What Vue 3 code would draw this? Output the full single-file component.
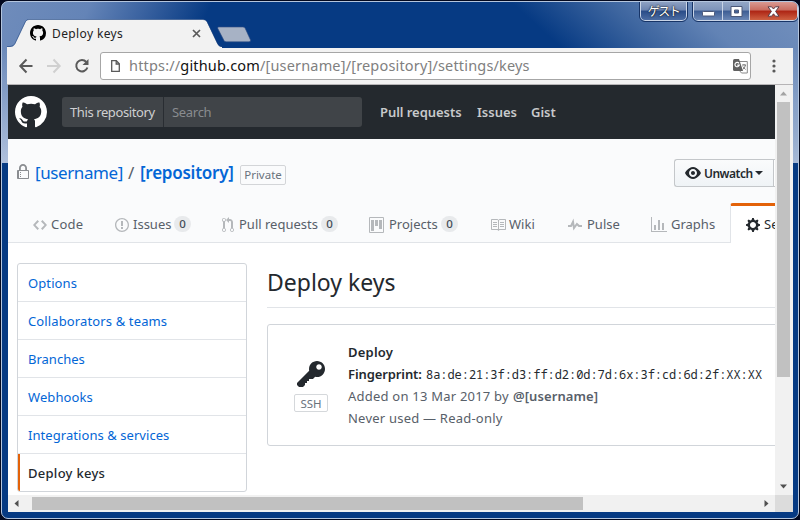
<script setup>
const mark = 'M8 0C3.58 0 0 3.58 0 8c0 3.54 2.29 6.53 5.47 7.59.4.07.55-.17.55-.38 0-.19-.01-.82-.01-1.49-2.01.37-2.53-.49-2.69-.94-.09-.23-.48-.94-.82-1.13-.28-.15-.68-.52-.01-.53.63-.01 1.08.58 1.23.82.72 1.21 1.87.87 2.33.66.07-.52.28-.87.51-1.07-1.78-.2-3.64-.89-3.64-3.95 0-.87.31-1.59.82-2.15-.08-.2-.36-1.02.08-2.12 0 0 .67-.21 2.2.82.64-.18 1.32-.27 2-.27.68 0 1.36.09 2 .27 1.53-1.04 2.2-.82 2.2-.82.44 1.1.16 1.92.08 2.12.51.56.82 1.27.82 2.15 0 3.07-1.87 3.75-3.65 3.95.29.25.54.73.54 1.48 0 1.07-.01 1.93-.01 2.2 0 .21.15.46.55.38A8.013 8.013 0 0 0 16 8c0-4.42-3.58-8-8-8z'

const tabs = [
  { id: 'code', label: 'Code', w: 14, d: 'M9.5 3L8 4.5 11.5 8 8 11.5 9.5 13 14 8 9.5 3zm-5 0L0 8l4.5 5L6 11.5 2.5 8 6 4.5 4.5 3z' },
  { id: 'issues', label: 'Issues', count: 0, w: 14, d: 'M7 2.3c3.14 0 5.7 2.56 5.7 5.7s-2.56 5.7-5.7 5.7A5.71 5.71 0 0 1 1.3 8c0-3.14 2.56-5.7 5.7-5.7zM7 1C3.14 1 0 4.14 0 8s3.14 7 7 7 7-3.14 7-7-3.14-7-7-7zm1 3H6v5h2V4zm0 6H6v2h2v-2z' },
  { id: 'pulls', label: 'Pull requests', count: 0, w: 12, d: 'M11 11.28V5c-.03-.78-.34-1.47-.94-2.06C9.46 2.35 8.78 2.03 8 2H7V0L4 3l3 3V4h1c.27.02.48.11.69.31.21.2.3.42.31.69v6.28A1.993 1.993 0 0 0 10 15a1.993 1.993 0 0 0 1-3.72zm-1 2.92c-.66 0-1.2-.55-1.2-1.2 0-.65.55-1.2 1.2-1.2.65 0 1.2.55 1.2 1.2 0 .65-.55 1.2-1.2 1.2zM4 3c0-1.11-.89-2-2-2a1.993 1.993 0 0 0-1 3.72v6.56A1.993 1.993 0 0 0 2 15a1.993 1.993 0 0 0 1-3.72V4.72c.59-.34 1-.98 1-1.72zm-.8 10c0 .66-.55 1.2-1.2 1.2-.65 0-1.2-.55-1.2-1.2 0-.65.55-1.2 1.2-1.2.65 0 1.2.55 1.2 1.2zM2 4.2C1.34 4.2.8 3.65.8 3c0-.65.55-1.2 1.2-1.2.65 0 1.2.55 1.2 1.2 0 .65-.55 1.2-1.2 1.2z' },
  { id: 'projects', label: 'Projects', count: 0, w: 15, d: 'M10 12h3V3h-3v9zm-4-3h3V3H6v6zm-4 5h3V3H2v11zM14 0H1a1 1 0 0 0-1 1v14a1 1 0 0 0 1 1h13a1 1 0 0 0 1-1V1a1 1 0 0 0-1-1zM1 15V1h13v14H1z' },
  { id: 'wiki', label: 'Wiki', w: 16, d: 'M3 5h4v1H3V5zm0 3h4V7H3v1zm0 2h4V9H3v1zm11-5h-4v1h4V5zm0 2h-4v1h4V7zm0 2h-4v1h4V9zm2-6v9c0 .55-.45 1-1 1H9.5l-1 1-1-1H2c-.55 0-1-.45-1-1V3c0-.55.45-1 1-1h5.5l1 1 1-1H15c.55 0 1 .45 1 1zm-8 .5L7.5 3H2v9h6V3.5zm7-.5H9.5l-.5.5V12h6V3z' },
  { id: 'pulse', label: 'Pulse', w: 14, d: 'M11.5 8L8.8 5.4 6.6 8.5 5.5 1.6 2.38 8H0v2h3.6l.9-1.8.9 5.4L9 8.5l1.6 1.5H14V8h-2.5z' },
  { id: 'graphs', label: 'Graphs', w: 16, d: 'M16 14v1H0V0h1v14h15zM5 13H3V8h2v5zm4 0H7V3h2v10zm4 0h-2V6h2v7z' },
  { id: 'settings', label: 'Settings', w: 14, d: 'M14 8.77v-1.6l-1.94-.64-.45-1.09.88-1.84-1.13-1.13-1.81.91-1.09-.45-.69-1.92h-1.6l-.63 1.94-1.11.45-1.84-.88-1.13 1.13.91 1.81-.45 1.09L0 7.23v1.59l1.94.64.45 1.09-.88 1.84 1.13 1.13 1.81-.91 1.09.45.69 1.92h1.59l.63-1.94 1.11-.45 1.84.88 1.13-1.13-.92-1.81.47-1.09L14 8.75v.02zM7 11c-1.66 0-3-1.34-3-3s1.34-3 3-3 3 1.34 3 3-1.34 3-3 3z' },
]

const menu = [
  { id: 'options', label: 'Options' },
  { id: 'collab', label: 'Collaborators & teams' },
  { id: 'branches', label: 'Branches' },
  { id: 'webhooks', label: 'Webhooks' },
  { id: 'integrations', label: 'Integrations & services' },
  { id: 'keys', label: 'Deploy keys' },
]
</script>

<template>
  <div class="desktop">
    <div class="window">
      <header class="titlebar">
        <svg class="tabshape" width="260" height="30" viewBox="0 0 260 30">
          <path d="M0 29.500V28H3Q6.500 28 8 25L18.500 3Q19.500 .5 22 .5H196Q199 .5 200 3L210.500 25Q212 28 215 28V29.500Z" fill="#f2f2f2" />
          <path d="M0 27.500H3Q6.500 27.500 8 24.500L18.500 2.500Q19.500 .5 22 .5H196Q199 .5 200 2.500L210.500 24.500Q212 27.500 215 27.500" fill="none" stroke="#193f7c" stroke-opacity=".55" />
          <path d="M211.500 8H235.500Q237.500 8 238 9L243.500 21Q244 22.800 242 22.800H219.500Q217.500 22.800 217 21.500L210.800 9.500Q210.500 8 211.500 8Z" fill="#a7b2c5" stroke="#324f83" stroke-opacity=".6" />
        </svg>
        <div class="tab">
          <svg class="favicon" width="16" height="16" viewBox="0 0 16 16"><path :d="mark" /></svg>
          <span class="tabtitle">Deploy keys</span>
          <svg class="tabclose" width="9" height="9" viewBox="0 0 9 9"><path d="M1 1l7 7M8 1L1 8" stroke="#5a5a5a" stroke-width="1.700" /></svg>
        </div>
        <div class="guest">ゲスト</div>
        <div class="controls">
          <span class="ctl min"><svg width="13" height="7" viewBox="0 0 13 7"><rect x=".5" y="1.500" width="12" height="4.500" rx="1" fill="#fff" stroke="#4c5878" /></svg></span>
          <span class="ctl max"><svg width="13" height="11" viewBox="0 0 13 11"><path fill-rule="evenodd" d="M1 .5H12V10.500H1ZM4.500 4V7H8.500V4Z" fill="#fff" stroke="#4c5878" /></svg></span>
          <span class="ctl close"><svg width="13" height="11" viewBox="0 0 13 11"><path d="M1 .8H4.600L6.500 3 8.400.8H12L8.600 5.400 12 10.200H8.400L6.500 7.800 4.600 10.200H1L4.400 5.400Z" fill="#fff" stroke="#5a3c46" /></svg></span>
        </div>
      </header>

      <div class="toolbar">
        <svg class="nav" width="74" height="18" viewBox="0 0 74 18" fill="none" stroke-width="2">
          <path d="M15.500 9H3.500M9.500 2.500L3.300 9 9.500 15.500" stroke="#5a5a5a" />
          <path d="M30 9H42M36.500 2.500L42.700 9 36.500 15.500" stroke="#d0d0d0" />
          <path d="M69.300 5A5.700 5.700 0 1 0 70.400 10.500" stroke="#5a5a5a" />
          <path d="M71.500 2V8H65.500Z" fill="#5a5a5a" />
        </svg>
        <div class="omnibox">
          <svg class="page" width="9" height="12" viewBox="0 0 9 12" fill="none" stroke="#5a5a5a" stroke-width="1.300"><path d="M.7.7H5.300L8.300 3.800V11.300H.7Z" /><path d="M5.200.7V4H8.300" /></svg>
          <span class="url">https://<b>github.com</b>/[username]/[repository]/settings/keys</span>
          <svg class="translate" width="15" height="15" viewBox="0 0 15 15">
            <path d="M6 2.500H14.300V14H8.500L6 11" fill="#fff" stroke="#8a8a8a" />
            <path d="M1.500 0H6L10 12H1.500Q0 12 0 10.500V1.500Q0 0 1.500 0Z" fill="#616161" />
            <path d="M6 4.300A2.200 2.200 0 1 0 6.300 6.100H4.200" fill="none" stroke="#fff" stroke-width="1.200" />
            <path d="M9 6H13M11 5V6M12.500 6Q12 9 9.600 10.500M9.800 7.500L12.500 10.500" fill="none" stroke="#777" />
          </svg>
        </div>
        <svg class="dots" width="4" height="14" viewBox="0 0 4 14" fill="#5a5a5a"><circle cx="2" cy="2" r="1.600" /><circle cx="2" cy="7" r="1.600" /><circle cx="2" cy="12" r="1.600" /></svg>
      </div>

      <div class="body">
        <div class="viewport">
          <div class="ghhead">
            <svg class="logo" width="32" height="32" viewBox="0 0 16 16"><path :d="mark" fill="#fff" /></svg>
            <div class="search"><span class="scope">This repository</span><span class="ph">Search</span></div>
            <span class="hl h1">Pull requests</span><span class="hl h2">Issues</span><span class="hl h3">Gist</span>
          </div>
          <div class="repohead">
            <div class="titlerow">
              <svg class="lock" width="12" height="16" viewBox="0 0 12 16" fill="#8a8d91"><path d="M4 13H3v-1h1v1zm8-6v7c0 .55-.45 1-1 1H1c-.55 0-1-.45-1-1V7c0-.55.45-1 1-1h1V4c0-2.200 1.800-4 4-4s4 1.800 4 4v2h1c.55 0 1 .45 1 1zM3.800 6h4.410V4c0-1.220-.98-2.200-2.200-2.200-1.220 0-2.200.98-2.200 2.200v2H3.800zM11 7H2v7h9V7zM4 8H3v1h1V8zm0 2H3v1h1v-1z" /></svg>
              <span class="owner">[username]</span><span class="slash">/</span><span class="repo">[repository]</span>
              <span class="private">Private</span>
              <div class="watch">
                <svg width="16" height="16" viewBox="0 0 16 16" fill="#24292e"><path d="M8.060 2C3 2 0 8 0 8s3 6 8.060 6C13 14 16 8 16 8s-3-6-7.940-6zM8 12c-2.200 0-4-1.780-4-4 0-2.200 1.800-4 4-4 2.220 0 4 1.800 4 4 0 2.220-1.780 4-4 4zm2-4c0 1.110-.89 2-2 2-1.110 0-2-.89-2-2 0-1.110.89-2 2-2 1.110 0 2 .89 2 2z" /></svg>
                <span class="wt">Unwatch</span><i class="caret"></i>
              </div>
              <div class="watchcount"></div>
            </div>
            <nav class="tabs">
              <div v-for="t in tabs" :key="t.id" class="rt" :class="t.id">
                <svg :width="t.w" height="16" :viewBox="`0 0 ${t.w} 16`"><path fill-rule="evenodd" :d="t.d" /></svg>
                <span class="lab">{{ t.label }}</span>
                <span v-if="t.count !== undefined" class="count">{{ t.count }}</span>
              </div>
            </nav>
          </div>
          <div class="main">
            <div class="menu">
              <div v-for="m in menu" :key="m.id" class="mi" :class="m.id">{{ m.label }}</div>
            </div>
            <div class="content">
              <h2>Deploy keys</h2>
              <div class="box">
                <div class="keycol">
                  <svg width="28" height="32" viewBox="0 0 14 16" fill="#24292e"><path d="M12.830 2.170C12.080 1.420 11.140 1.030 10 1c-1.130.03-2.080.42-2.830 1.170S6.040 3.860 6.010 5c0 .3.03.59.09.89L0 12v1l1 1h2l1-1v-1h1v-1h1v-1h2l1.090-1.110c.3.08.59.11.91.11 1.140-.03 2.080-.42 2.830-1.170S13.970 6.140 14 5c-.03-1.140-.42-2.080-1.170-2.830zM11 5.380c-.77 0-1.380-.61-1.380-1.380 0-.77.61-1.380 1.380-1.380.77 0 1.380.61 1.380 1.380 0 .77-.61 1.380-1.380 1.380z" /></svg>
                  <span class="ssh">SSH</span>
                </div>
                <div class="info">
                  <div class="ln dark"><span class="i1">Deploy</span></div>
                  <div class="ln dark"><span class="i2">Fingerprint:</span><code>8a:de:21:3f:d3:ff:d2:0d:7d:6x:3f:cd:6d:2f:XX:XX</code></div>
                  <div class="ln"><span class="i3">Added on 13 Mar 2017 by</span><span class="i4">@[username]</span></div>
                  <div class="ln"><span class="i5">Never used — Read-only</span></div>
                </div>
              </div>
            </div>
          </div>
        </div>
        <div class="vscroll">
          <svg width="9" height="5" viewBox="0 0 9 5"><path d="M1 4.500L4.500.5 8 4.500Z" fill="#a3a3a3" /></svg>
          <div class="vthumb"></div>
          <svg class="down" width="9" height="5" viewBox="0 0 9 5"><path d="M1 .5H8L4.500 4.500Z" fill="#505050" /></svg>
        </div>
        <div class="hscroll">
          <svg width="5" height="9" viewBox="0 0 5 9"><path d="M4.500 1V8L.5 4.500Z" fill="#505050" /></svg>
          <div class="hthumb"></div>
          <svg class="right" width="5" height="9" viewBox="0 0 5 9"><path d="M.5 1V8L4.500 4.500Z" fill="#505050" /></svg>
        </div>
        <div class="corner"></div>
      </div>
    </div>
  </div>
</template>

<style>
body { margin: 0; background: #000; }
</style>

<style scoped>
* { box-sizing: border-box; }
svg { display: block; flex: none; }
span { white-space: nowrap; }
.desktop { width: 800px; height: 520px; padding: 1px 0 0 1px; background: #03091f; overflow: hidden; font-family: "Noto Sans", sans-serif; color: #24292e; }
.window {
  width: 798px; height: 518px; border: 1px solid #b4c5dd; border-radius: 7px; overflow: hidden;
  display: flex; flex-direction: column;
  background:
    linear-gradient(rgba(190,203,226,0), rgba(200,212,232,.75)) 0 46px / 6px 115px no-repeat,
    linear-gradient(rgba(190,203,226,0), rgba(200,212,232,.75)) 100% 46px / 6px 115px no-repeat,
    linear-gradient(115deg, #6f8cbb 0, #6484b7 22%, #3a62a0 36%, rgba(0,56,130,0) 52%) 0 0 / 330px 161px no-repeat,
    linear-gradient(222deg, #7390bd 0, #6283b5 24%, #3d659f 40%, rgba(0,56,130,0) 60%) 100% 0 / 300px 161px no-repeat,
    #063a83;
}
.titlebar { position: relative; height: 46px; flex: none; display: flex; align-items: flex-start; }
.tabshape { position: absolute; left: 5px; top: 17px; }
.tab { position: relative; width: 210px; height: 28px; margin: 17px 0 0 28px; display: flex; align-items: center; }
.tabtitle { width: 142px; margin-left: 6px; font-size: 12px; letter-spacing: .38px; color: #222; }
.tabclose { margin-left: -2px; }
.guest { margin-left: 400px; width: 47px; height: 19px; border: 1px solid #c9d4e6; border-top: 0; border-radius: 0 0 5px 5px; outline: 1px solid #173467; background: linear-gradient(#8da0c2, #6c84b0 45%, #294c88 50%, #4b6ca2); color: #fff; font: 12px/18px "Noto Sans CJK JP", sans-serif; letter-spacing: -1.500px; text-align: center; text-shadow: 0 0 2px #111, 0 0 1px #111; }
.controls { margin-left: 6px; height: 19px; display: flex; border: 1px solid #c9d4e6; border-top: 0; border-radius: 0 0 5px 5px; outline: 1px solid #173467; overflow: hidden; }
.ctl { height: 18px; display: flex; align-items: center; justify-content: center; background: linear-gradient(#93a6c6, #7d93b9 45%, #3d5d94 50%, #6b87b5); }
.min { width: 29px; padding-top: 5px; border-right: 1px solid #c9d4e6; }
.max { width: 27px; border-right: 1px solid #c9d4e6; }
.close { width: 47px; background: linear-gradient(#d99a92, #c96c5f 45%, #ad2414 50%, #ce6142); }

.toolbar { height: 37px; flex: none; margin: 0 5px; background: #f2f2f2; border-bottom: 1px solid #b6b4b6; display: flex; align-items: center; padding-left: 1px; }
.nav { margin-left: 9px; }
.omnibox { flex: none; width: 651px; height: 28px; margin-left: 9px; background: #fff; border: 1px solid #a6a6a6; border-radius: 3px; display: flex; align-items: center; }
.page { margin-left: 10px; }
.url { width: 602px; margin: -2px 0 0 9px; font-size: 14.500px; letter-spacing: .17px; color: #808080; }
.url b { font-weight: 400; color: #111; }
.translate { margin-left: 2px; }
.dots { margin-left: 21px; }

.body { width: 785px; height: 427px; margin-left: 6px; display: grid; grid-template: 410px 17px / 767px 18px; background: #fff; }
.viewport { overflow: hidden; background: #fff; }
.ghhead { height: 54px; background: #24292e; display: flex; align-items: center; padding-left: 7px; }
.search { width: 300px; height: 30px; margin-left: 15px; background: #404448; border-radius: 3px; display: flex; align-items: center; font-size: 13px; }
.scope { width: 102px; height: 30px; line-height: 30px; padding-left: 8px; border-right: 1px solid #292d32; color: #cfd0d1; letter-spacing: -.4px; }
.ph { margin-left: 8px; color: #898c8f; letter-spacing: -.3px; }
.hl { font-size: 13px; font-weight: 600; color: #c8c9cb; flex: none; }
.h1 { width: 97px; margin-left: 18px; letter-spacing: -.05px; }
.h2 { width: 54px; }

.repohead { height: 104px; background: #fafbfc; border-bottom: 1px solid #e1e4e8; display: flex; flex-direction: column; justify-content: space-between; }
.titlerow { height: 28px; margin-top: 20px; padding-left: 9px; display: flex; align-items: center; font-size: 17px; color: #0366d6; }
.titlerow > * { flex: none; }
.lock { margin-top: -3px; }
.owner, .slash, .repo { margin-top: -2px; }
.owner { width: 92px; margin-left: 6px; letter-spacing: -.4px; }
.slash { width: 13px; padding-left: 1px; color: #586069; }
.repo { width: 100px; font-weight: 600; letter-spacing: -.25px; }
.private { width: 46px; height: 20px; margin-top: 4px; border: 1px solid #d3d5d8; border-radius: 2px; font-size: 11.500px; line-height: 18px; text-align: center; color: #6a737d; }
.watch { width: 99px; height: 28px; margin-left: 388px; border: 1px solid #c4c7ca; border-right: 0; border-radius: 3px 0 0 3px; background: linear-gradient(#fafbfc, #eff3f6); display: flex; align-items: center; padding-left: 10px; color: #24292e; font-size: 12px; font-weight: 600; }
.watchcount { width: 30px; height: 28px; border: 1px solid #c4c7ca; background: #fff; }
.wt { width: 48px; margin-left: 3px; letter-spacing: -.5px; }
.caret { margin-left: 3px; border: 4px solid transparent; border-top-color: #24292e; border-bottom: 0; }
.tabs { height: 40px; display: flex; margin-bottom: -1px; padding-left: 25px; }
.rt { display: flex; align-items: center; flex: none; font-size: 13px; color: #586069; padding-top: 3px; }
.rt svg { fill: #b5b8bb; margin-right: 4px; }
.lab { margin-top: -1px; }
.count { width: 17px; height: 16px; margin-top: -1px; border-radius: 8px; background: #e8eaec; font-size: 11.500px; font-weight: 500; line-height: 16px; text-align: center; color: #444d56; }
.code { width: 82px; }
.code .lab { letter-spacing: .2px; }
.issues { width: 107px; }
.issues .lab { width: 41px; }
.pulls { width: 147px; }
.pulls .lab { width: 83px; }
.rt.pulls svg { margin-right: 5px; }
.pulls .count { margin-left: -1px; }
.projects { width: 121px; }
.projects .lab { width: 52px; }
.rt.projects svg { margin-right: 5px; }
.wiki { width: 78px; }
.rt.wiki svg { margin-right: 3px; }
.rt.pulse svg { margin-right: 5px; }
.pulse { width: 83px; }
.graphs { width: 79px; }
.settings { width: 108px; background: #fff; border: 1px solid #e1e4e8; border-bottom: 0; border-top: 3px solid #e36209; border-radius: 3px 3px 0 0; padding: 0 0 0 15px; color: #24292e; }
.rt.settings svg { fill: #24292e; }

.main { display: flex; padding: 20px 0 0 9px; }
.menu { width: 230px; height: 229px; flex: none; border: 1px solid #d1d5da; border-radius: 3px; overflow: hidden; font-size: 13px; color: #0366d6; }
.mi { height: 38px; line-height: 38px; padding-left: 10px; border-bottom: 1px solid #e1e4e8; letter-spacing: .1px; }
.mi.branches { letter-spacing: 0; }
.mi.collab { letter-spacing: .13px; }
.mi.integrations { letter-spacing: .06px; }
.mi.keys { border-bottom: 0; border-left: 2px solid #e36209; padding-left: 8px; color: #24292e; font-weight: 500; letter-spacing: .28px; }
.content { margin-left: 20px; width: 700px; flex: none; }
h2 { margin: 0; height: 45px; border-bottom: 1px solid #e1e4e8; font-size: 23px; font-weight: 400; line-height: 38px; }
.box { margin-top: 16px; height: 122px; border: 1px solid #d1d5da; border-radius: 3px; display: flex; }
.keycol { width: 80px; padding: 34px 0 0 26px; display: flex; flex-direction: column; align-items: flex-start; }
.keycol svg { margin-left: 3px; }
.ssh { width: 34px; height: 18px; margin-top: 3px; border: 1px solid #d5d8db; border-radius: 2px; font-size: 11.500px; line-height: 17px; text-align: center; color: #6a737d; }
.info { padding-top: 16px; }
.ln { height: 22px; line-height: 22px; display: flex; font-size: 13px; color: #586069; letter-spacing: .22px; }
.dark { color: #24292e; }
.i1, .i2, .i4 { font-weight: 600; }
.i2 { width: 78px; letter-spacing: -.1px; }
.i3 { width: 165px; }
.i4 { letter-spacing: .08px; }
code { font: 12px/23px "Noto Sans Mono", "DejaVu Sans Mono", monospace; letter-spacing: -.05px; white-space: nowrap; }

.vscroll { background: #f1f1f1; display: flex; flex-direction: column; align-items: center; padding: 6px 1px 0 0; }
.vthumb { width: 13px; height: 275px; margin-top: 6px; background: #c1c1c1; }
.down { margin-top: 107px; }
.hscroll { background: #f1f1f1; display: flex; align-items: center; padding-left: 6px; }
.hthumb { width: 551px; height: 13px; margin-left: 13px; background: #c1c1c1; }
.right { margin-left: 181px; }
.corner { background: #dcdcdc; }
</style>
